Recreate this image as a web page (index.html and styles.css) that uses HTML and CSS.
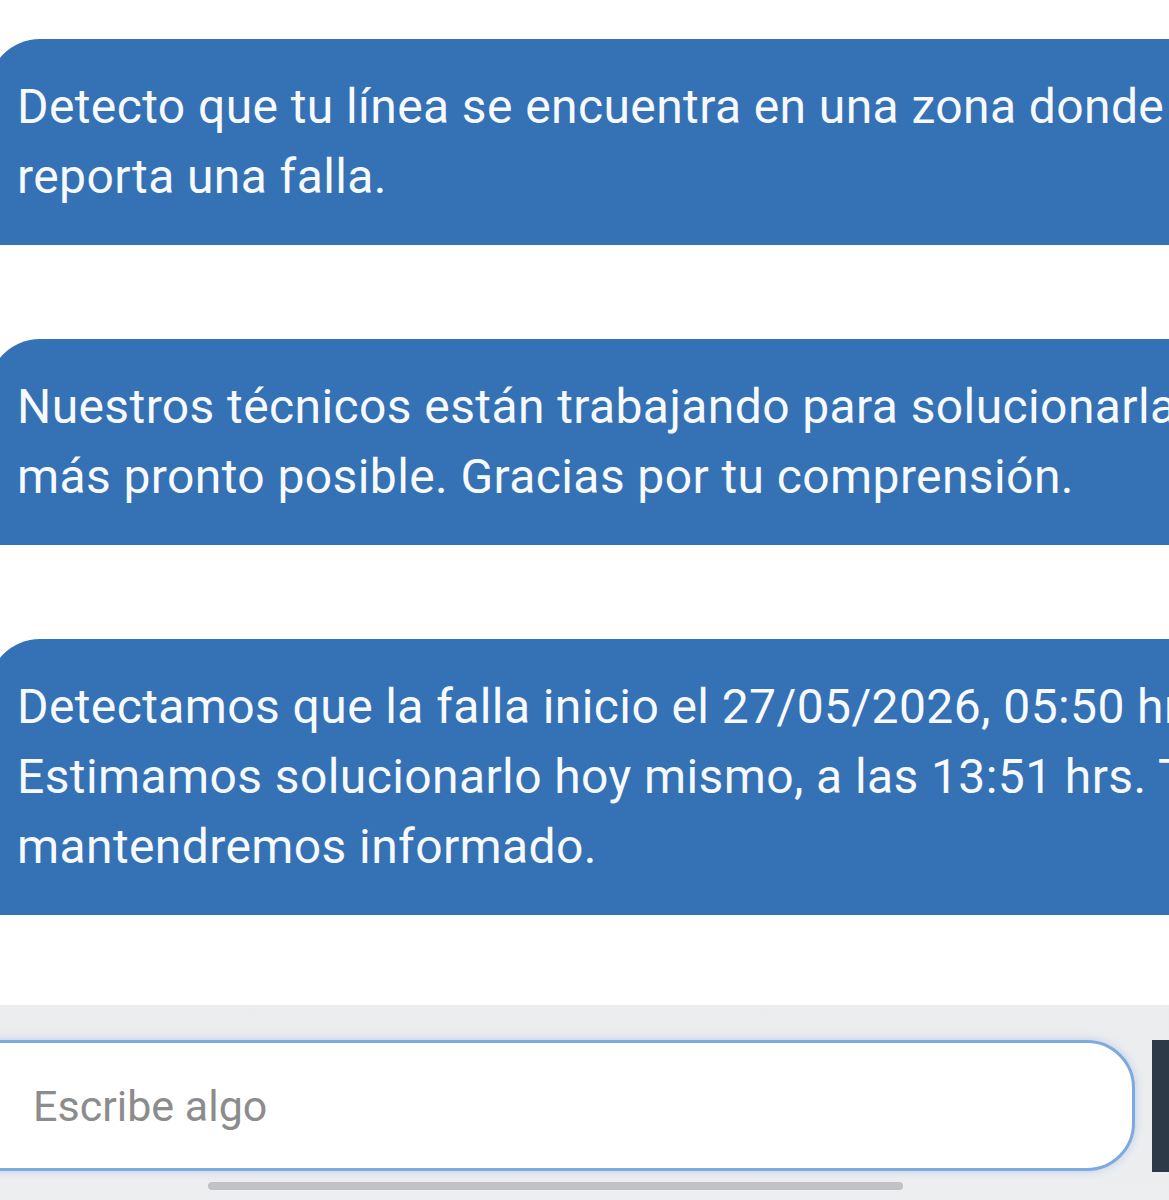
FILE: index.html
```html
<!DOCTYPE html>
<html lang="es">
<head>
<meta charset="utf-8">
<title>Chat</title>
<link rel="stylesheet" href="styles.css">
</head>
<body>
<div class="screen">
  <main class="thread">
    <div class="bubble">Detecto que tu línea se encuentra en una zona donde se reporta una falla.</div>
    <div class="bubble">Nuestros técnicos están trabajando para solucionarla lo más pronto posible. Gracias por tu comprensión.</div>
    <div class="bubble">Detectamos que la falla inicio el 27/05/2026, 05:50 hrs. Estimamos solucionarlo hoy mismo, a las 13:51 hrs. Te mantendremos informado.</div>
  </main>
  <footer class="composer">
    <div class="composer-row">
      <div class="field"><span class="placeholder">Escribe algo</span></div>
      <button class="send" type="button" aria-label="Enviar"></button>
    </div>
    <div class="scrollbar"><div class="thumb"></div></div>
  </footer>
</div>
</body>
</html>
```
FILE: styles.css
```css
html, body {
  margin: 0;
  padding: 0;
  background: #ffffff;
  overflow: hidden;
}

.screen {
  width: 1169px;
  height: 1200px;
  display: flex;
  flex-direction: column;
  font-family: Roboto, "Noto Sans", sans-serif;
  overflow: hidden;
}

/* message list runs wider than the viewport, so long lines are clipped on the right */
.thread {
  padding-top: 39px;
  display: flex;
  flex-direction: column;
  gap: 94px;
  margin-left: -12px;
  width: 1300px;
  flex-shrink: 0;
}

.bubble {
  background: #3472b5;
  color: #f7f9fc;
  border-radius: 52px 0 0 0;
  padding: 33px 30px 33px 29px;
  font-size: 48px;
  line-height: 70px;
  letter-spacing: 0.4px;
}

.composer {
  margin-top: auto;
  height: 195px;
  background: linear-gradient(#ebecee, #eceef0);
  display: flex;
  flex-direction: column;
}

.composer-row {
  margin-top: 35px;
  display: flex;
  align-items: flex-start;
  gap: 17px;
  margin-left: -40px;
}

.field {
  flex-shrink: 0;
  width: 1175px;
  height: 131px;
  box-sizing: border-box;
  background: #ffffff;
  border: 3px solid #7ea9df;
  border-radius: 0 48px 48px 0;
  box-shadow: 0 0 8px rgba(126, 169, 223, 0.45);
  display: flex;
  align-items: center;
  padding-left: 70px;
}

.placeholder {
  color: #8c8c8c;
  font-size: 43px;
}

.send {
  flex-shrink: 0;
  width: 40px;
  height: 132px;
  border: 0;
  padding: 0;
  background: #2e3a48;
}

.scrollbar {
  margin-top: 10px;
  padding-left: 208px;
}

.thumb {
  width: 695px;
  height: 8px;
  border-radius: 4px;
  background: #c0c2c6;
}
```
